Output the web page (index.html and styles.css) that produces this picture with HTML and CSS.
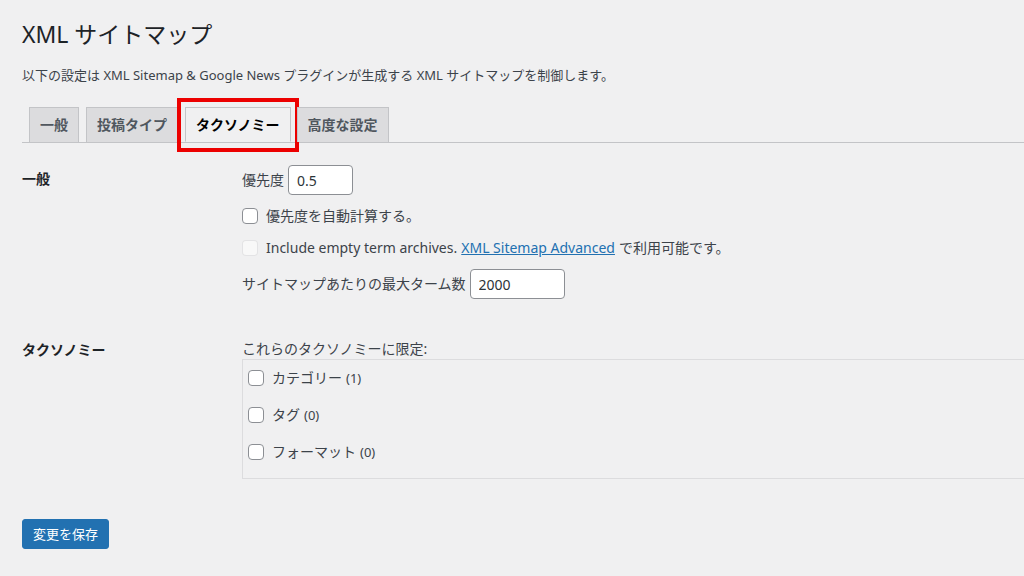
FILE: index.html
```html
<!DOCTYPE html>
<html lang="ja">
<head>
<meta charset="utf-8">
<title>XML サイトマップ</title>
<link rel="stylesheet" href="styles.css">
</head>
<body>
<div class="wrap">
  <h1 class="page-title">XML サイトマップ</h1>
  <p class="intro">以下の設定は XML Sitemap &amp; Google News プラグインが生成する XML サイトマップを制御します。</p>

  <nav class="tabs">
    <a class="tab">一般</a>
    <a class="tab">投稿タイプ</a>
    <a class="tab tab-active">タクソノミー<span class="highlight"></span></a>
    <a class="tab tab-last">高度な設定</a>
  </nav>

  <div class="form-table">
    <div class="row row-general">
      <div class="th">一般</div>
      <div class="td">
        <div class="line"><span class="lbl">優先度</span><input class="text small" type="text" value="0.5"></div>
        <label class="line check"><input type="checkbox" class="cb">優先度を自動計算する。</label>
        <label class="line check"><input type="checkbox" class="cb" disabled>Include empty term archives. <a class="link">XML Sitemap Advanced</a> で利用可能です。</label>
        <div class="line"><span class="lbl">サイトマップあたりの最大ターム数</span><input class="text medium" type="text" value="2000"></div>
      </div>
    </div>
    <div class="row row-tax">
      <div class="th">タクソノミー</div>
      <div class="td">
        <div class="box-title">これらのタクソノミーに限定:</div>
        <div class="tax-box">
          <label class="line check"><input type="checkbox" class="cb">カテゴリー <span class="count">(1)</span></label>
          <label class="line check"><input type="checkbox" class="cb">タグ <span class="count">(0)</span></label>
          <label class="line check"><input type="checkbox" class="cb">フォーマット <span class="count">(0)</span></label>
        </div>
      </div>
    </div>
  </div>

  <p class="submit"><button class="button-primary" type="button">変更を保存</button></p>
</div>
</body>
</html>
```

FILE: styles.css
```css
html, body {
  margin: 0;
  padding: 0;
  overflow: hidden;
}
body {
  background: #f0f0f1;
  color: #3c434a;
  font-family: "Noto Sans", "Noto Sans CJK JP", sans-serif;
  font-size: 13px;
  line-height: 1.4;
}
.wrap {
  padding: 10px 0 0 22px;
}
.page-title {
  margin: 0;
  padding: 9px 0 4px;
  font-size: 23px;
  font-weight: 400;
  line-height: 30px;
  color: #1d2327;
}
.intro {
  margin: 12px 0 0;
  font-size: 13px;
  line-height: 20px;
}
.tabs {
  display: flex;
  margin-top: 22px;
  border-bottom: 1px solid #c3c4c7;
  height: 35px;
}
.tab {
  position: relative;
  display: block;
  margin-left: 7px;
  padding: 5px 10px;
  border: 1px solid #c3c4c7;
  border-bottom: none;
  background: #dcdcde;
  color: #50575e;
  font-size: 14px;
  font-weight: 600;
  line-height: 24px;
  white-space: nowrap;
}
.tab-active {
  background: #f0f0f1;
  color: #000;
  border-bottom: 1px solid #f0f0f1;
}
.tab-last {
  margin-left: 6px;
}
.highlight {
  position: absolute;
  left: -9px;
  right: -9px;
  top: -10px;
  bottom: -11px;
  border: 4px solid #ec0000;
  pointer-events: none;
}
.form-table {
  margin-top: 7px;
  font-size: 14px;
}
.row {
  display: grid;
  grid-template-columns: 210px 1fr;
}
.th {
  padding: 20px 10px 20px 0;
  font-weight: 600;
  color: #1d2327;
  line-height: 18px;
}
.td {
  padding: 15px 10px;
  display: flex;
  flex-direction: column;
  gap: 10px;
  min-width: 0;
}
.row-general .td {
  padding-bottom: 22px;
}
.line {
  display: flex;
  align-items: center;
  min-height: 22px;
  line-height: 22px;
  white-space: nowrap;
}
.lbl {
  margin-right: 4px;
}
.text {
  box-sizing: border-box;
  height: 30px;
  padding: 0 8px;
  border: 1px solid #8c8f94;
  border-radius: 4px;
  background: #fff;
  color: #2c3338;
  font-family: inherit;
  font-size: 14px;
}
.small { width: 65px; }
.medium { width: 95px; }
.cb {
  appearance: none;
  -webkit-appearance: none;
  box-sizing: border-box;
  width: 16px;
  height: 16px;
  margin: 0 8px 0 0;
  border: 1px solid #8c8f94;
  border-radius: 4px;
  background: #fff;
  flex: none;
}
.cb:disabled {
  border-color: rgba(220, 220, 222, 0.75);
  background: rgba(255, 255, 255, 0.5);
}
.link {
  color: #2271b1;
  text-decoration: underline;
  margin: 0 4px;
}
.row-tax .td {
  padding-top: 17px;
  gap: 0;
}
.box-title {
  line-height: 21px;
}
.tax-box {
  width: 1000px;
  box-sizing: border-box;
  border: 1px solid #dcdcde;
  padding: 7px 5px 15px;
  display: flex;
  flex-direction: column;
  gap: 15px;
}
.count {
  margin-left: 4px;
  font-size: 13px;
}
.submit {
  margin: 25px 0 0;
}
.button-primary {
  height: 30px;
  padding: 0 10px;
  border: 1px solid #2271b1;
  border-radius: 3px;
  background: #2271b1;
  color: #fff;
  font-family: inherit;
  font-size: 13px;
  line-height: 28px;
}
```
